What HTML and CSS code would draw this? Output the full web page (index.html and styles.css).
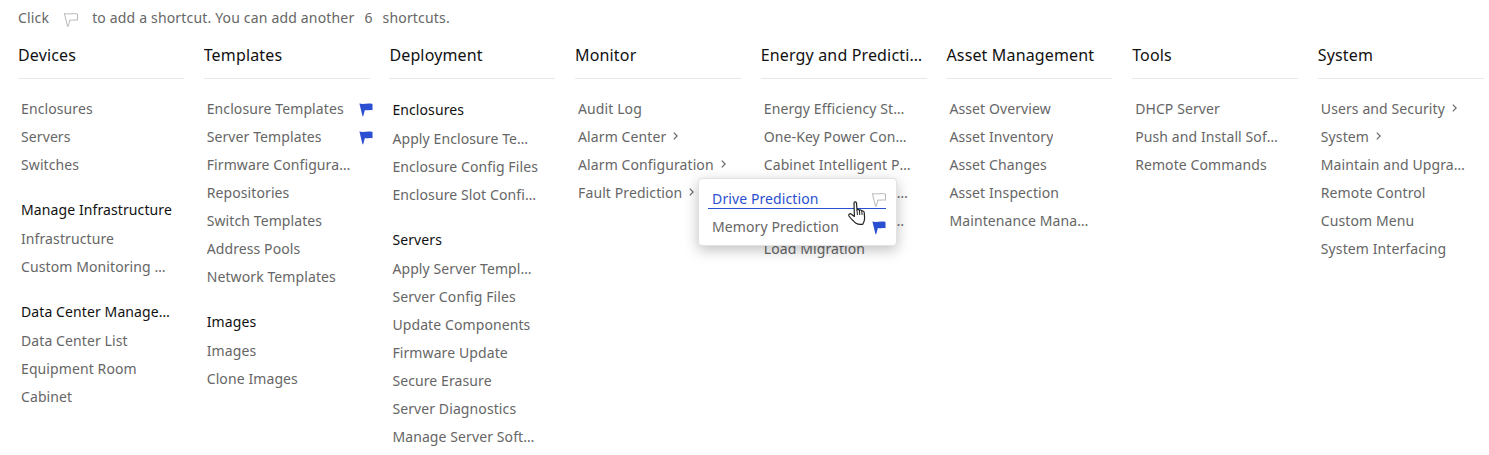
FILE: index.html
```html
<!DOCTYPE html>
<html lang="en">
<head>
    <meta charset="UTF-8">
    <meta name="viewport" content="width=device-width, initial-scale=1.0">
    <title>All Menus</title>
    <link rel="stylesheet" href="styles.css">
</head>
<body>
    <svg class="icon-defs" width="0" height="0">
        <symbol id="flag" viewBox="0 0 14 14">
            <path d="M.4 .6 C4.5 1.6 9 -.1 13.5 1 V7.2 C10.5 6.4 8.2 7.6 5.9 7 L4.2 13.3 H3.5 Z"/>
        </symbol>
        <symbol id="chev" viewBox="0 0 5 8">
            <path d="M.8 .6 L4.2 4 L.8 7.4" fill="none" stroke="currentColor" stroke-width="1.2"/>
        </symbol>
    </svg>

    <!-- Hint -->
    <p class="hint">
        <span>Click</span>
        <svg class="flag flag-off"><use href="#flag"/></svg>
        <span>to add a shortcut. You can add another</span>
        <span>6</span>
        <span>shortcuts.</span>
    </p>

    <!-- Menu columns -->
    <div class="menu-grid">
        <section class="menu-col">
            <h2>Devices</h2>
            <ul class="group">
                <li><span class="label">Enclosures</span></li>
                <li><span class="label">Servers</span></li>
                <li><span class="label">Switches</span></li>
            </ul>
            <h3>Manage Infrastructure</h3>
            <ul class="group">
                <li><span class="label">Infrastructure</span></li>
                <li><span class="label">Custom Monitoring Metrics</span></li>
            </ul>
            <h3>Data Center Management</h3>
            <ul class="group">
                <li><span class="label">Data Center List</span></li>
                <li><span class="label">Equipment Room</span></li>
                <li><span class="label">Cabinet</span></li>
            </ul>
        </section>

        <section class="menu-col">
            <h2>Templates</h2>
            <ul class="group">
                <li><span class="label">Enclosure Templates</span><svg class="flag flag-on"><use href="#flag"/></svg></li>
                <li><span class="label">Server Templates</span><svg class="flag flag-on"><use href="#flag"/></svg></li>
                <li><span class="label">Firmware Configuration Files</span></li>
                <li><span class="label">Repositories</span></li>
                <li><span class="label">Switch Templates</span></li>
                <li><span class="label">Address Pools</span></li>
                <li><span class="label">Network Templates</span></li>
            </ul>
            <h3>Images</h3>
            <ul class="group">
                <li><span class="label">Images</span></li>
                <li><span class="label">Clone Images</span></li>
            </ul>
        </section>

        <section class="menu-col">
            <h2>Deployment</h2>
            <h3 class="first">Enclosures</h3>
            <ul class="group">
                <li><span class="label">Apply Enclosure Templates</span></li>
                <li><span class="label">Enclosure Config Files</span></li>
                <li><span class="label">Enclosure Slot Configuration</span></li>
            </ul>
            <h3>Servers</h3>
            <ul class="group">
                <li><span class="label">Apply Server Templates</span></li>
                <li><span class="label">Server Config Files</span></li>
                <li><span class="label">Update Components</span></li>
                <li><span class="label">Firmware Update</span></li>
                <li><span class="label">Secure Erasure</span></li>
                <li><span class="label">Server Diagnostics</span></li>
                <li><span class="label">Manage Server Software</span></li>
            </ul>
        </section>

        <section class="menu-col">
            <h2>Monitor</h2>
            <ul class="group">
                <li><span class="label">Audit Log</span></li>
                <li><span class="label">Alarm Center</span><svg class="chev"><use href="#chev"/></svg></li>
                <li><span class="label">Alarm Configuration</span><svg class="chev"><use href="#chev"/></svg></li>
                <li class="has-popup">
                    <span class="label">Fault Prediction</span><svg class="chev"><use href="#chev"/></svg>
                    <div class="popup">
                        <div class="popup-row active"><span class="label">Drive Prediction</span><svg class="flag flag-off"><use href="#flag"/></svg></div>
                        <div class="popup-row"><span class="label">Memory Prediction</span><svg class="flag flag-on"><use href="#flag"/></svg></div>
                        <!-- mouse pointer -->
                        <svg class="hand" viewBox="0 0 18 24">
                            <path d="M6 2 C6 .4 8.4 .4 8.5 2 L9 9 C9.2 8 11.2 8 11.4 9.4 C11.8 8.6 13.6 8.8 13.8 10.2 C14.2 9.6 16 9.8 16.2 11.4 L16.6 17 C16.7 20 15.6 21.6 14.8 23.2 C12 23.8 9.4 23.2 7.6 22 C5.4 20 2.6 17.6 1 15 C.2 13.4 2 12 3.4 13.2 L6.4 15.4 Z" fill="#fff" stroke="#222" stroke-width="1.2" stroke-linejoin="round"/>
                            <path d="M9 9 L9.4 14 M11.4 9.4 L11.8 14 M13.8 10.2 L14.1 14" fill="none" stroke="#222" stroke-width="1"/>
                        </svg>
                    </div>
                </li>
            </ul>
        </section>

        <section class="menu-col">
            <h2>Energy and Prediction Management</h2>
            <ul class="group">
                <li><span class="label">Energy Efficiency Statistics</span></li>
                <li><span class="label">One-Key Power Control Settings</span></li>
                <li><span class="label">Cabinet Intelligent Power Control</span></li>
                <li><span class="label">Power Usage Trend Prediction</span></li>
                <li><span class="label">Energy Saving Policy Management</span></li>
                <li><span class="label">Load Migration</span></li>
            </ul>
        </section>

        <section class="menu-col">
            <h2>Asset Management</h2>
            <ul class="group">
                <li><span class="label">Asset Overview</span></li>
                <li><span class="label">Asset Inventory</span></li>
                <li><span class="label">Asset Changes</span></li>
                <li><span class="label">Asset Inspection</span></li>
                <li><span class="label">Maintenance Management</span></li>
            </ul>
        </section>

        <section class="menu-col">
            <h2>Tools</h2>
            <ul class="group">
                <li><span class="label">DHCP Server</span></li>
                <li><span class="label">Push and Install Software</span></li>
                <li><span class="label">Remote Commands</span></li>
            </ul>
        </section>

        <section class="menu-col">
            <h2>System</h2>
            <ul class="group">
                <li><span class="label">Users and Security</span><svg class="chev"><use href="#chev"/></svg></li>
                <li><span class="label">System</span><svg class="chev"><use href="#chev"/></svg></li>
                <li><span class="label">Maintain and Upgrade System</span></li>
                <li><span class="label">Remote Control</span></li>
                <li><span class="label">Custom Menu</span></li>
                <li><span class="label">System Interfacing</span></li>
            </ul>
        </section>
    </div>
</body>
</html>
```

FILE: styles.css
```css
body {
    font-family: "Noto Sans", "Open Sans", sans-serif;
    font-size: 14px;
    letter-spacing: .1px;
    color: #666;
    margin: 0;
    padding: 8px 6px 0 18px;
    height: 447px;
    overflow: hidden;
    background: #fff;
}
.icon-defs {
    position: absolute;
}
.hint {
    display: flex;
    align-items: center;
    gap: 10px;
    height: 20px;
    margin: 0 0 16px;
    line-height: 20px;
    letter-spacing: .17px;
}
.hint .flag {
    margin: 3px 4px 0 5px;
}
.menu-grid {
    display: grid;
    grid-template-columns: repeat(8, 166px);
    column-gap: 19.7px;
}
.menu-col h2 {
    font-size: 16px;
    font-weight: 400;
    letter-spacing: .15px;
    color: #111;
    height: 34px;
    line-height: 22px;
    margin: 0 0 15px;
    border-bottom: 1px solid #e8e8e8;
    white-space: nowrap;
    overflow: hidden;
    text-overflow: ellipsis;
}
.menu-col h3 {
    font-size: 14px;
    font-weight: 400;
    color: #111;
    height: 30px;
    line-height: 32px;
    margin: 16px 0 0 3px;
    white-space: nowrap;
    overflow: hidden;
    text-overflow: ellipsis;
    max-width: 152px;
}
.menu-col h3.first {
    margin-top: 0;
}
.group {
    list-style: none;
    margin: 0;
    padding: 0;
}
.group li {
    display: flex;
    align-items: center;
    height: 28px;
    padding-left: 3px;
}
.label {
    max-width: 147px;
    white-space: nowrap;
    overflow: hidden;
    text-overflow: ellipsis;
}
.flag {
    flex: none;
    width: 14px;
    height: 14px;
}
.group li .flag {
    margin: 3px -3px 0 auto;
}
.flag-on {
    fill: #2a4fd0;
}
.flag-off {
    fill: none;
    stroke: #b8b8b8;
    stroke-width: 1;
}
.chev {
    flex: none;
    width: 5px;
    height: 8px;
    margin-left: 7px;
    color: #666;
}

/* flyout for Fault Prediction */
.has-popup {
    position: relative;
}
.group li .popup .flag {
    margin: 3px 0 0;
}
.popup {
    position: absolute;
    z-index: 2;
    left: 123px;
    top: 0;
    box-sizing: border-box;
    width: 199px;
    height: 68px;
    padding: 6px 10px 0 9px;
    background: #fff;
    border: 1px solid #e2e2e2;
    border-radius: 4px;
    box-shadow: 0 4px 14px rgba(0, 0, 0, .25);
}
.popup-row {
    display: flex;
    align-items: center;
    justify-content: space-between;
    height: 28px;
    margin-top: 3px;
    padding-left: 4px;
    box-sizing: border-box;
}
.popup-row .label {
    max-width: none;
}
.popup-row.active {
    color: #2a4fd0;
    border-bottom: 1px solid #2a4fd0;
    height: 24px;
    margin-top: 0;
    padding-top: 3px;
}
.hand {
    position: absolute;
    left: 149px;
    top: 22px;
    width: 18px;
    height: 24px;
}
```
